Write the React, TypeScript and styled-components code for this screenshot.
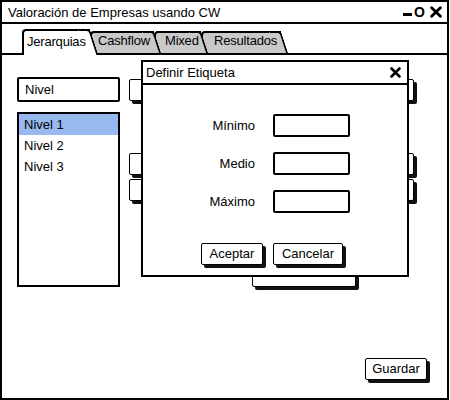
import React from "react";
import styled, { createGlobalStyle } from "styled-components";

const Global = createGlobalStyle`
  html, body { margin: 0; padding: 0; background: #fff; }
  body { font-family: "Liberation Sans", Arial, sans-serif; color: #000; }
  * { box-sizing: border-box; }
`;

const Window = styled.div`
  position: relative;
  width: 449px;
  height: 400px;
  border: 2px solid #000;
  display: flex;
  flex-direction: column;
  background: #fff;
  overflow: hidden;
`;

const TitleBar = styled.div`
  height: 22px;
  border-bottom: 2px solid #000;
  display: flex;
  align-items: center;
  justify-content: space-between;
  padding: 0 5px 0 6px;
  font-size: 13px;
`;

const Controls = styled.div`
  display: flex;
  align-items: center;
  gap: 2px;
  font-weight: bold;
  font-size: 14px;
`;

const MinBar = styled.span`
  width: 9px;
  height: 3px;
  background: #000;
  align-self: flex-end;
  margin-bottom: 3px;
`;

const MaxGlyph = styled.span`
  line-height: 14px;
  margin-right: 3px;
`;

const TabStrip = styled.div`
  display: flex;
  align-items: flex-end;
  height: 29px;
  padding-left: 20px;
  position: relative;
  z-index: 2;
`;

const Tab = styled.div<{ $active?: boolean; $w: number; $pad: number; $z: number }>`
  position: relative;
  width: ${(p) => p.$w}px;
  height: ${(p) => (p.$active ? 26 : 22)}px;
  margin-bottom: ${(p) => (p.$active ? -2 : 0)}px;
  padding-left: ${(p) => p.$pad}px;
  padding-top: ${(p) => (p.$active ? 3 : 0)}px;
  line-height: 16px;
  font-size: 13px;
  letter-spacing: -0.2px;
  white-space: nowrap;
  background: ${(p) => (p.$active ? "#fff" : "#c9c9c9")};
  border-top: 2px solid #000;
  border-left: 2px solid #000;
  border-top-left-radius: 4px;
  z-index: ${(p) => p.$z};
  &::after {
    content: "";
    position: absolute;
    z-index: -1;
    top: -2px;
    bottom: 0;
    right: 0;
    width: 10px;
    background: ${(p) => (p.$active ? "#fff" : "#c9c9c9")};
    border-top: 2px solid #000;
    border-right: 2px solid #000;
    border-top-right-radius: 4px;
    transform: skewX(18deg);
    transform-origin: top left;
  }
`;

const Panel = styled.div`
  flex: 1;
  border-top: 2px solid #000;
  display: flex;
  flex-direction: column;
  padding: 22px 20px 0 15px;
`;

const TopArea = styled.div`
  display: flex;
  padding-right: 13px;
`;

const LeftCol = styled.div`
  width: 103px;
  display: flex;
  flex-direction: column;
  gap: 10px;
`;

const TextInput = styled.div<{ $w?: number; $h?: number }>`
  width: ${(p) => p.$w ?? 103}px;
  height: ${(p) => p.$h ?? 25}px;
  border: 2px solid #000;
  border-radius: 2px;
  background: #fff;
  font-size: 13px;
  line-height: 21px;
  padding-left: 6px;
`;

const ListBox = styled.div`
  height: 175px;
  border: 2px solid #000;
  display: flex;
  flex-direction: column;
`;

const ListItem = styled.div<{ $selected?: boolean }>`
  height: 21px;
  line-height: 21px;
  padding-left: 5px;
  font-size: 13px;
  background: ${(p) => (p.$selected ? "#97b9ef" : "transparent")};
`;

const ButtonCol = styled.div<{ $ml?: number }>`
  display: flex;
  flex-direction: column;
  margin-left: ${(p) => p.$ml ?? 0}px;
  padding-top: 2px;
`;

const Button = styled.div<{ $w: number; $mt?: number }>`
  width: ${(p) => p.$w}px;
  height: 22px;
  margin-top: ${(p) => p.$mt ?? 0}px;
  border: 1.5px solid #000;
  border-radius: 2px;
  box-shadow: 3px 3px 0 #111;
  background: #fff;
  font-size: 13px;
  line-height: 19px;
  text-align: center;
  white-space: nowrap;
`;

const CenterCol = styled.div`
  flex: 1;
  display: flex;
  align-items: flex-end;
  padding-left: 63px;
`;

const Footer = styled.div`
  display: flex;
  justify-content: flex-end;
  margin-top: 71px;
`;

const Dialog = styled.div`
  position: absolute;
  left: 139px;
  top: 58px;
  width: 268px;
  height: 217px;
  border: 2px solid #000;
  background: #fff;
  z-index: 10;
  display: flex;
  flex-direction: column;
`;

const DialogTitle = styled.div`
  height: 23px;
  border-bottom: 2px solid #000;
  display: flex;
  align-items: center;
  justify-content: space-between;
  padding: 0 6px 0 3px;
  font-size: 13px;
`;

const FormGrid = styled.div`
  display: grid;
  grid-template-columns: 112px 77px;
  column-gap: 18px;
  row-gap: 15px;
  margin-top: 29px;
  align-items: center;
`;

const Label = styled.div`
  text-align: right;
  font-size: 13px;
`;

const DialogButtons = styled.div`
  display: flex;
  justify-content: center;
  gap: 10px;
  margin-top: 30px;
  padding-right: 6px;
`;

const CloseIcon = ({ size = 11 }: { size?: number }) => (
  <svg width={size} height={size} viewBox="0 0 11 11">
    <path d="M1.5 1.5 L9.5 9.5 M9.5 1.5 L1.5 9.5" stroke="#000" strokeWidth="2.6" strokeLinecap="round" />
  </svg>
);

export default function App() {
  return (
    <>
      <Global />
      <Window>
        <TitleBar>
          <span>Valoración de Empresas usando CW</span>
          <Controls>
            <MinBar />
            <MaxGlyph>O</MaxGlyph>
            <CloseIcon size={12} />
          </Controls>
        </TitleBar>
        <TabStrip>
          <Tab $active $w={68} $pad={3} $z={5}>Jerarquias</Tab>
          <Tab $w={64} $pad={6} $z={4}>Cashflow</Tab>
          <Tab $w={47} $pad={9} $z={3}>Mixed</Tab>
          <Tab $w={80} $pad={11} $z={2}>Resultados</Tab>
        </TabStrip>
        <Panel>
          <TopArea>
            <LeftCol>
              <TextInput>Nivel</TextInput>
              <ListBox>
                <ListItem $selected>Nivel 1</ListItem>
                <ListItem>Nivel 2</ListItem>
                <ListItem>Nivel 3</ListItem>
              </ListBox>
            </LeftCol>
            <ButtonCol $ml={9}>
              <Button $w={60} />
              <Button $w={60} $mt={52} />
              <Button $w={60} $mt={4} />
            </ButtonCol>
            <CenterCol>
              <Button $w={104} />
            </CenterCol>
            <ButtonCol>
              <Button $w={55} />
              <Button $w={55} $mt={52} />
              <Button $w={55} $mt={4} />
            </ButtonCol>
          </TopArea>
          <Footer>
            <Button $w={62}>Guardar</Button>
          </Footer>
        </Panel>
        <Dialog>
          <DialogTitle>
            <span>Definir Etiqueta</span>
            <CloseIcon />
          </DialogTitle>
          <FormGrid>
            <Label>Mínimo</Label>
            <TextInput $w={77} $h={23} />
            <Label>Medio</Label>
            <TextInput $w={77} $h={23} />
            <Label>Máximo</Label>
            <TextInput $w={77} $h={23} />
          </FormGrid>
          <DialogButtons>
            <Button $w={62}>Aceptar</Button>
            <Button $w={70}>Cancelar</Button>
          </DialogButtons>
        </Dialog>
      </Window>
    </>
  );
}
